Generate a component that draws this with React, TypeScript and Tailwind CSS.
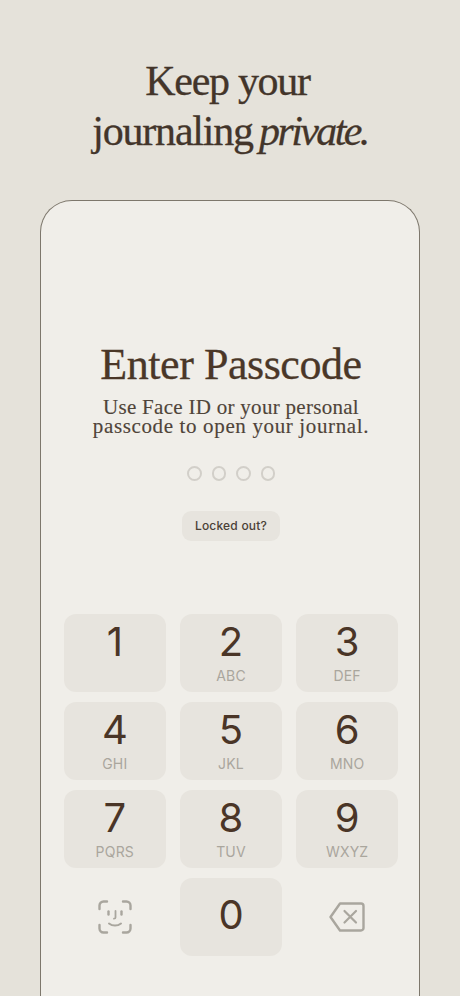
const keys: [string, string][] = [
  ["1", ""], ["2", "ABC"], ["3", "DEF"],
  ["4", "GHI"], ["5", "JKL"], ["6", "MNO"],
  ["7", "PQRS"], ["8", "TUV"], ["9", "WXYZ"],
];

function Key({ n, l }: { n: string; l: string }) {
  return (
    <div className="h-[78px] rounded-[12px] bg-[#e7e4de] flex flex-col items-center font-['Inter',sans-serif]">
      <div className={`h-[52px] ${n === "0" ? "pt-[14px]" : "pt-[5px]"} text-[40px] leading-[46px] font-normal text-[#4a3527]`}>{n}</div>
      <div className="mt-[1px] text-[14px] leading-[17px] tracking-[0.2px] text-[#aaa69d]">{l}</div>
    </div>
  );
}

function FaceId() {
  return (
    <svg width="34" height="34" viewBox="0 0 34 34" fill="none" stroke="#a9a69e" strokeWidth="2.4" strokeLinecap="round" strokeLinejoin="round">
      <path d="M1.500 9V5.500a4 4 0 0 1 4-4H9" />
      <path d="M25 1.500h3.500a4 4 0 0 1 4 4V9" />
      <path d="M32.500 25v3.500a4 4 0 0 1-4 4H25" />
      <path d="M9 32.500H5.500a4 4 0 0 1-4-4V25" />
      <path d="M10.500 11.500v3" />
      <path d="M23.500 11.500v3" />
      <path d="M17.500 11v6.500c0 .8-.5 1.200-1.500 1.200" strokeWidth="1.800" />
      <path d="M11 23.500c3.500 2.800 8.500 2.800 12 0" strokeWidth="2" />
    </svg>
  );
}

function Backspace() {
  return (
    <svg width="36" height="30" viewBox="0 0 36 30" fill="none" stroke="#a9a69e" strokeLinecap="round" strokeLinejoin="round">
      <path d="M11 1.500h21a2.500 2.500 0 0 1 2.500 2.500v22a2.500 2.500 0 0 1-2.500 2.500H11L1.500 15Z" strokeWidth="2.400" />
      <path d="M15.500 9l11.500 11.500M27 9 15.500 20.500" strokeWidth="2.200" />
    </svg>
  );
}

export default function App() {
  const serif = "font-['Liberation_Serif',serif]";
  return (
    <div className="w-[460px] h-[996px] overflow-hidden bg-[#e5e2da] flex flex-col items-center">
      <h1 className={`${serif} mt-[56px] h-[144px] text-center text-[42px] leading-[50px] font-normal tracking-[-1.3px] text-[#43352a] [-webkit-text-stroke:0.3px_#43352a]`}>
        <span className="pr-[5px]">Keep your</span>
        <br />
        <span className="tracking-[-1.2px]">journaling</span>{" "}
        <em className="italic tracking-[-2.6px] -ml-[3px]">private.</em>
      </h1>
      <div className="w-[380px] flex-1 pl-[2px] rounded-t-[32px] border border-b-0 border-[#7d776c] bg-[#f0eee9] flex flex-col items-center">
        <h2 className={`${serif} mt-[138px] text-[44px] leading-[52px] font-normal tracking-[-0.45px] text-[#4a3728] [-webkit-text-stroke:0.3px_#4a3728]`}>
          Enter Passcode
        </h2>
        <p className={`${serif} mt-[7px] text-center text-[21px] leading-[19px] text-[#4f4439] [-webkit-text-stroke:0.15px_#4f4439]`}>
          <span className="tracking-[0.29px]">Use Face ID or your personal</span>
          <br />
          <span className="tracking-[0.64px]">passcode to open your journal.</span>
        </p>
        <div className="mt-[30px] flex gap-[10px]">
          {[0, 1, 2, 3].map((i) => (
            <div key={i} className="w-[14.500px] h-[14.500px] rounded-full border-2 border-[#d2cfc9]" />
          ))}
        </div>
        <div className="mt-[30px] w-[98px] h-[30px] rounded-[9px] bg-[#e7e4de] flex items-center justify-center font-['Inter',sans-serif] text-[12px] font-medium tracking-[0.2px] text-[#4a4036]">
          Locked out?
        </div>
        <div className="mt-[73px] w-[335px] grid grid-cols-3 gap-x-[13.500px] gap-y-[10.300px]">
          {keys.map(([n, l]) => (
            <Key key={n} n={n} l={l} />
          ))}
          <div className="h-[78px] flex items-center justify-center">
            <FaceId />
          </div>
          <Key n="0" l="" />
          <div className="h-[78px] flex items-center justify-center">
            <Backspace />
          </div>
        </div>
      </div>
    </div>
  );
}
